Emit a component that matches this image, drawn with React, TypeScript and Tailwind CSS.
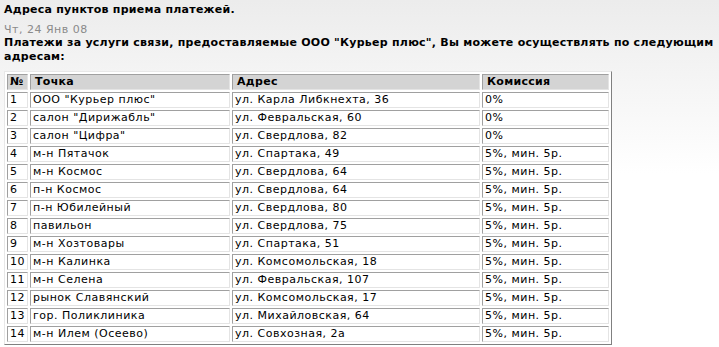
import React from "react";

const rows: [string, string, string][] = [
  ['ООО "Курьер плюс"', "ул. Карла Либкнехта, 36", "0%"],
  ['салон "Дирижабль"', "ул. Февральская, 60", "0%"],
  ['салон "Цифра"', "ул. Свердлова, 82", "0%"],
  ["м-н Пятачок", "ул. Спартака, 49", "5%, мин. 5р."],
  ["м-н Космос", "ул. Свердлова, 64", "5%, мин. 5р."],
  ["п-н Космос", "ул. Свердлова, 64", "5%, мин. 5р."],
  ["п-н Юбилейный", "ул. Свердлова, 80", "5%, мин. 5р."],
  ["павильон", "ул. Свердлова, 75", "5%, мин. 5р."],
  ["м-н Хозтовары", "ул. Спартака, 51", "5%, мин. 5р."],
  ["м-н Калинка", "ул. Комсомольская, 18", "5%, мин. 5р."],
  ["м-н Селена", "ул. Февральская, 107", "5%, мин. 5р."],
  ["рынок Славянский", "ул. Комсомольская, 17", "5%, мин. 5р."],
  ["гор. Поликлиника", "ул. Михайловская, 64", "5%, мин. 5р."],
  ["м-н Илем (Осеево)", "ул. Совхозная, 2а", "5%, мин. 5р."],
];

// old-school border=1 table cell: inset bevel
const cell =
  "h-[16px] px-[2px] py-0 leading-[14px] border border-t-[#a0a0a0] border-l-[#a0a0a0] border-b-[#e4e4e4] border-r-[#e4e4e4] whitespace-nowrap";

export default function App() {
  return (
    <div className="min-h-[347px] bg-gradient-to-b from-[#ececec] via-white to-white text-[11px] text-black font-['DejaVu_Sans','Verdana',sans-serif] pl-[4px] pt-[3px]">
      <div className="font-bold leading-[14px] tracking-[0.25px]">Адреса пунктов приема платежей.</div>
      <div className="mt-[6px] leading-[14px] text-[#8a8a8a] tracking-[0.5px]">Чт, 24 Янв 08</div>
      <div className="-mt-[1px] font-bold leading-[14px] tracking-[0.25px]">
        Платежи за услуги связи, предоставляемые ООО "Курьер плюс", Вы можете осуществлять по следующим адресам:
      </div>
      <table className="mt-[7px] border-separate border-spacing-[2px] border border-t-[#e8e8e8] border-l-[#e8e8e8] border-b-[#808080] border-r-[#808080] bg-white tracking-[0.5px]">
        <thead>
          <tr className="font-bold bg-[#d4d4d4] tracking-[0.3px]">
            <th className={cell + " w-[15px] text-left"}>№</th>
            <th className={cell + " w-[200px] text-left pl-[4px]"}>Точка</th>
            <th className={cell + " w-[248px] text-left pl-[4px]"}>Адрес</th>
            <th className={cell + " w-[127px] text-left pl-[4px]"}>Комиссия</th>
          </tr>
        </thead>
        <tbody>
          {rows.map((r, i) => (
            <tr key={i}>
              <td className={cell}>{i + 1}</td>
              <td className={cell}>{r[0]}</td>
              <td className={cell}>{r[1]}</td>
              <td className={cell}>{r[2]}</td>
            </tr>
          ))}
        </tbody>
      </table>
    </div>
  );
}
